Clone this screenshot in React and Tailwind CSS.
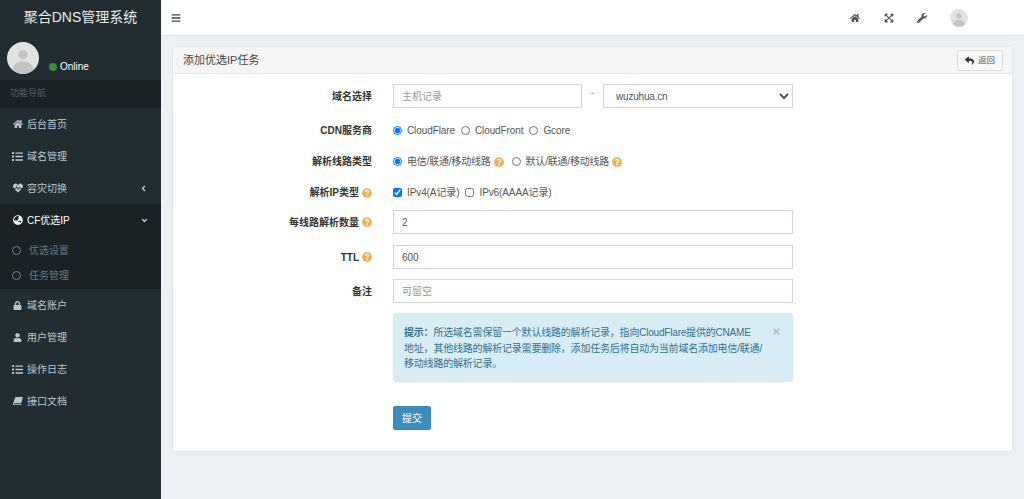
import React from "react";
import {
  FaHome,
  FaList,
  FaHeartbeat,
  FaGlobeAsia,
  FaLock,
  FaUser,
  FaWrench,
  FaAngleLeft,
  FaAngleDown,
  FaReply,
  FaQuestionCircle,
  FaBars,
  FaExpandArrowsAlt,
} from "react-icons/fa";

const font = "font-['Liberation_Sans','Noto_Sans_CJK_SC',sans-serif]";

function Avatar({ size }) {
  return (
    <svg viewBox="0 0 32 32" className={size}>
      <circle cx="16" cy="16" r="16" fill="#e2e2e2" />
      <circle cx="16" cy="12.5" r="4.6" fill="#c4c4c4" />
      <path d="M5.500 27.500c1-5.500 5-8 10.500-8s9.500 2.500 10.500 8a16 16 0 0 1-21 0z" fill="#c4c4c4" />
    </svg>
  );
}

function SlantedBook({ className }) {
  return (
    <svg viewBox="0 0 12 10" className={className} fill="currentColor">
      <path d="M3 0h9l-2.200 7.600H1.800c-.5 0-.8.3-.8.6s.3.6.8.6h8.500L10 10H1.500C.6 10 0 9.300 0 8.400c0-.3 0-.5.1-.8z" />
    </svg>
  );
}

function Help() {
  return <FaQuestionCircle className="inline-block text-[10px] text-[#f0ad4e]" />;
}

function NavItem({ icon: Icon, label, arrow, iconClass }) {
  return (
    <div className="flex h-8 items-center pl-[12px] pr-[13px] text-[10px] text-[#b8c7ce]">
      <span className="flex w-[11px] shrink-0 justify-center">
        <Icon className={iconClass} />
      </span>
      <span className="ml-[4px] flex-1">{label}</span>
      {arrow && <FaAngleLeft className="text-[9px]" />}
    </div>
  );
}

function SubItem({ label }) {
  return (
    <div className="flex h-[25px] shrink-0 items-center pl-[12px]">
      <span className="h-[9px] w-[9px] rounded-full border-[1.500px] border-[#6b8793]" />
      <span className="ml-[8px]">{label}</span>
    </div>
  );
}

function Row({ label, help, children, className }) {
  return (
    <div className={"flex items-center " + className}>
      <div className="flex w-[199px] shrink-0 items-center justify-end gap-[3px] text-right text-[10px] font-bold text-[#333]">
        {label}
        {help && <Help />}
      </div>
      <div className="ml-[21px] w-[400px] shrink-0 text-[10px] text-[#555]">{children}</div>
    </div>
  );
}

function TextInput({ value, placeholder }) {
  return (
    <input
      readOnly
      value={value}
      placeholder={placeholder}
      className="block h-6 w-full border border-[#d2d6de] bg-white px-[8px] text-[10px] text-[#555] placeholder:text-[#999] outline-none"
    />
  );
}

function Choice({ type = "radio", name, checked, children, className }) {
  return (
    <label className={"flex items-center " + className}>
      <input
        type={type}
        name={name}
        defaultChecked={checked}
        className="m-0 h-[9px] w-[9px] shrink-0"
      />
      <span className="ml-[5px]">{children}</span>
    </label>
  );
}

export default function App() {
  return (
    <div className={"flex h-screen overflow-hidden bg-[#ecf0f5] " + font}>
      <aside className="w-[161px] shrink-0 bg-[#222d32]">
        <div className="flex h-9 items-center justify-center pb-[1px] text-[14px] text-[#e8eced]">
          聚合DNS管理系统
        </div>
        <div className="flex h-11 pl-[7px] pt-[6px]">
          <Avatar size="h-8 w-8" />
          <div className="ml-[10px] flex h-[38px] items-end pb-[6px] text-[10px] text-white">
            <span className="flex items-center">
              <span className="mr-[3px] h-2 w-2 rounded-full bg-[#3c8a3c]" />
              Online
            </span>
          </div>
        </div>
        <div className="flex h-7 items-center bg-[#1a2226] pl-[10px] text-[9px] text-[#4b646f]">功能导航</div>
        <NavItem icon={FaHome} iconClass="text-[10px]" label="后台首页" />
        <NavItem icon={FaList} iconClass="text-[11px]" label="域名管理" />
        <NavItem icon={FaHeartbeat} iconClass="text-[10px]" label="容灾切换" arrow />
        <div className="bg-[#1a2226]">
          <div className="flex h-8 items-center pl-[12px] pr-[12px] text-[10px] text-white">
            <span className="flex w-[11px] shrink-0 justify-center">
              <FaGlobeAsia className="text-[10px]" />
            </span>
            <span className="ml-[4px] flex-1">CF优选IP</span>
            <FaAngleDown className="text-[9px] text-[#b8c7ce]" />
          </div>
          <div className="flex h-[53px] flex-col pt-[2px] text-[10px] text-[#5f7a87]">
            <SubItem label="优选设置" />
            <SubItem label="任务管理" />
          </div>
        </div>
        <NavItem icon={FaLock} iconClass="text-[9px]" label="域名账户" />
        <NavItem icon={FaUser} iconClass="text-[9px]" label="用户管理" />
        <NavItem icon={FaList} iconClass="text-[11px]" label="操作日志" />
        <NavItem icon={SlantedBook} iconClass="w-[10px]" label="接口文档" />
      </aside>

      <div className="flex min-w-0 flex-1 flex-col">
        <header className="flex h-9 shrink-0 items-center border-b border-[#dfe3e8] bg-white pl-[10px] text-[#444]">
          <FaBars className="text-[10px]" />
          <div className="ml-auto flex items-center pr-[56px] text-[#555]">
            <FaHome className="text-[10px]" />
            <FaExpandArrowsAlt className="ml-[24px] text-[10px]" />
            <FaWrench className="ml-[23px] text-[10px]" />
            <div className="ml-[23px]">
              <Avatar size="h-[18px] w-[18px]" />
            </div>
          </div>
        </header>

        <main className="px-[11px] pt-[10px]">
          <section className="rounded-[3px] border border-[#e4e7ea] bg-white">
            <div className="flex h-[27px] items-center justify-between border-b border-[#e4e7ea] bg-[#f5f5f5] pl-[10px] pr-[9px] text-[11px] text-[#444]">
              添加优选IP任务
              <button className="flex h-[21px] w-[46px] items-center justify-center gap-[4px] rounded-[2px] border border-[#ddd] bg-[#f7f7f7] text-[8.500px] text-[#555]">
                <FaReply className="text-[9px] text-[#333]" />
                返回
              </button>
            </div>

            <div className="pb-[21px] pt-[10px]">
              <Row label="域名选择" className="h-6">
                <div className="flex items-center">
                  <div className="w-[189px]">
                    <TextInput placeholder="主机记录" />
                  </div>
                  <span className="mb-[8px] w-[21px] text-center text-[#999]">-</span>
                  <select
                    defaultValue="wuzuhua.cn"
                    className="h-6 w-[190px] border border-[#d2d6de] bg-white px-[8px] text-[10px] tracking-[-0.2px] text-[#555] outline-none"
                  >
                    <option>wuzuhua.cn</option>
                  </select>
                </div>
              </Row>

              <Row label="CDN服务商" className="mt-[15px] h-[15px]">
                <div className="flex items-center tracking-[-0.1px]">
                  <Choice name="cdn" checked>CloudFlare</Choice>
                  <Choice name="cdn" className="ml-[6px]">CloudFront</Choice>
                  <Choice name="cdn" className="ml-[6px]">Gcore</Choice>
                </div>
              </Row>

              <Row label="解析线路类型" className="mt-[16px] h-[15px]">
                <div className="flex items-center tracking-[-0.2px]">
                  <Choice name="line" checked>
                    <span className="flex items-center gap-[3px]">电信/联通/移动线路 <Help /></span>
                  </Choice>
                  <Choice name="line" className="ml-[8px]">
                    <span className="flex items-center gap-[3px]">默认/联通/移动线路 <Help /></span>
                  </Choice>
                </div>
              </Row>

              <Row label="解析IP类型" help className="mt-[16px] h-[15px]">
                <div className="flex items-center tracking-[-0.1px]">
                  <Choice type="checkbox" checked>IPv4(A记录)</Choice>
                  <Choice type="checkbox" className="ml-[6px]">IPv6(AAAA记录)</Choice>
                </div>
              </Row>

              <Row label="每线路解析数量" help className="mt-[10px] h-6">
                <TextInput value="2" />
              </Row>
              <Row label="TTL" help className="mt-[11px] h-6">
                <TextInput value="600" />
              </Row>
              <Row label="备注" className="mt-[10px] h-6">
                <TextInput placeholder="可留空" />
              </Row>

              <Row label="" className="mt-[10px]">
                <div className="flex h-[69px] rounded-[3px] border border-[#d4eaf3] bg-[#d9edf7] pl-[10px] pr-[12px] pt-[11px] leading-[15.700px] text-[#31708f]">
                  <p className="w-[362px] shrink-0 whitespace-nowrap text-[10px] tracking-[-0.2px]">
                    <b>提示：</b>所选域名需保留一个默认线路的解析记录，指向CloudFlare提供的CNAME
                    <br />
                    地址，其他线路的解析记录需要删除，添加任务后将自动为当前域名添加电信/联通/
                    <br />
                    移动线路的解析记录。
                  </p>
                  <span className="ml-auto text-[13px] leading-[14px] font-bold text-[#b0bcc4]">×</span>
                </div>
              </Row>

              <Row label="" className="mt-[24px]">
                <button className="h-6 w-[38px] rounded-[2px] border border-[#3a88b6] bg-[#3c8dbc] text-[10px] text-white">
                  提交
                </button>
              </Row>
            </div>
          </section>
        </main>
      </div>
    </div>
  );
}
